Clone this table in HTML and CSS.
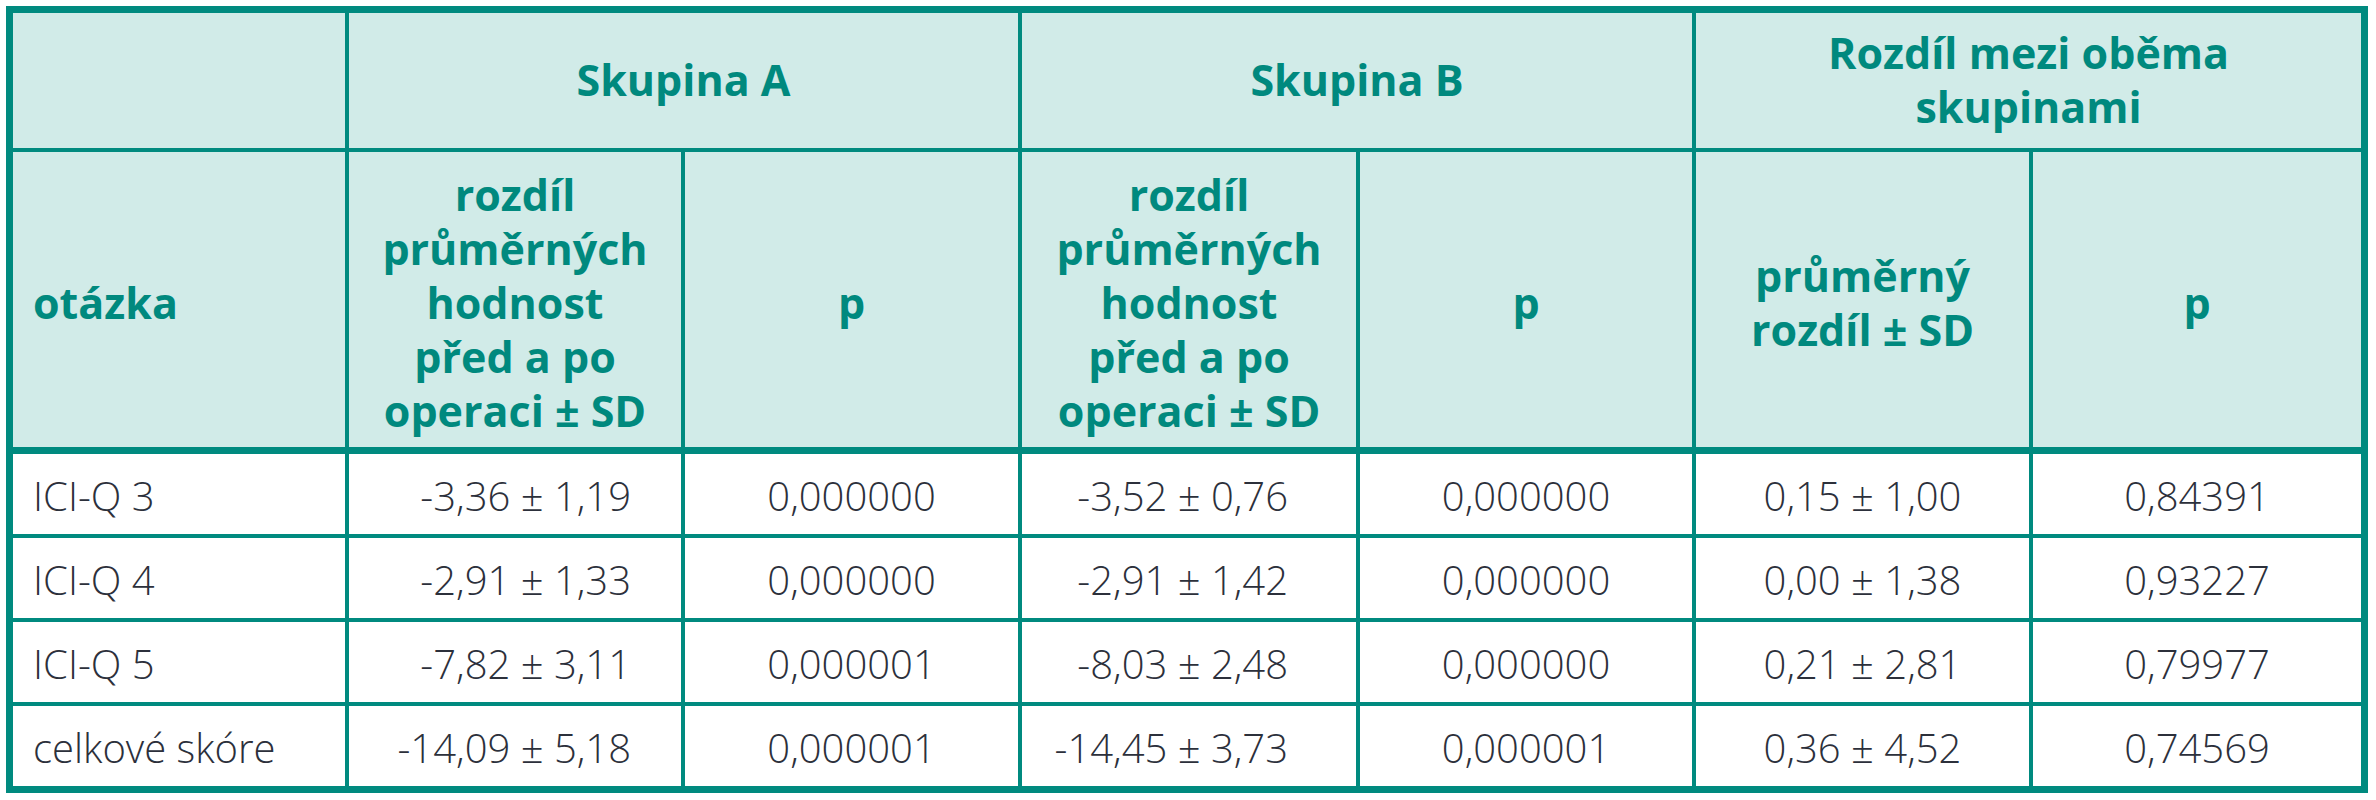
FILE: index.html
```html
<!DOCTYPE html>
<html lang="cs">
<head>
<meta charset="utf-8">
<title>Tabulka</title>
<link rel="stylesheet" href="styles.css">
</head>
<body>
<table class="data">
  <colgroup>
    <col class="w332">
    <col class="w336"><col class="w337"><col class="w338">
    <col class="w336"><col class="w337"><col class="w332">
  </colgroup>
  <thead>
    <tr class="h1">
      <th class="first"></th>
      <th colspan="2">Skupina A</th>
      <th colspan="2">Skupina B</th>
      <th colspan="2">Rozdíl mezi oběma<br>skupinami</th>
    </tr>
    <tr class="h2">
      <th class="first left">otázka</th>
      <th>rozdíl<br>průměrných<br>hodnost<br>před a po<br>operaci ± SD</th>
      <th>p</th>
      <th>rozdíl<br>průměrných<br>hodnost<br>před a po<br>operaci ± SD</th>
      <th>p</th>
      <th>průměrný<br>rozdíl ± SD</th>
      <th>p</th>
    </tr>
  </thead>
  <tbody>
    <tr class="r-first">
      <td class="first left">ICI-Q 3</td>
      <td class="va">-3,36 ± 1,19</td>
      <td>0,000000</td>
      <td class="vb">-3,52 ± 0,76</td>
      <td>0,000000</td>
      <td>0,15 ± 1,00</td>
      <td>0,84391</td>
    </tr>
    <tr>
      <td class="first left">ICI-Q 4</td>
      <td class="va">-2,91 ± 1,33</td>
      <td>0,000000</td>
      <td class="vb">-2,91 ± 1,42</td>
      <td>0,000000</td>
      <td>0,00 ± 1,38</td>
      <td>0,93227</td>
    </tr>
    <tr>
      <td class="first left">ICI-Q 5</td>
      <td class="va">-7,82 ± 3,11</td>
      <td>0,000001</td>
      <td class="vb">-8,03 ± 2,48</td>
      <td>0,000000</td>
      <td>0,21 ± 2,81</td>
      <td>0,79977</td>
    </tr>
    <tr>
      <td class="first left">celkové skóre</td>
      <td class="va">-14,09 ± 5,18</td>
      <td>0,000001</td>
      <td class="vb">-14,45 ± 3,73</td>
      <td>0,000001</td>
      <td>0,36 ± 4,52</td>
      <td>0,74569</td>
    </tr>
  </tbody>
</table>
</body>
</html>
```
FILE: styles.css
```css
html, body {
  background: #ffffff;
}
body {
  margin: 6px;
}
.data {
  box-sizing: border-box;
  width: 2362px;
  table-layout: fixed;
  border-collapse: separate;
  border-spacing: 0;
  border: 7px solid #008a7f;
}
.w332 { width: 332px; }
.w336 { width: 336px; }
.w337 { width: 337px; }
.w338 { width: 338px; }

.data th,
.data td {
  box-sizing: border-box;
  padding: 0 8px;
  text-align: center;
  vertical-align: middle;
  border-left: 4px solid #008a7f;
  border-top: 4px solid #008a7f;
  white-space: nowrap;
}
.data th.first,
.data td.first {
  border-left: 0;
}
.data .left {
  text-align: left;
  padding-left: 20px;
}

.data thead th {
  background: #d1ebe8;
  color: #00897e;
  font-family: "Open Sans", "Liberation Sans", sans-serif;
  font-weight: 700;
  font-size: 43px;
  line-height: 54px;
}
.data tr.h1 th {
  border-top: 0;
  height: 135px;
  padding-bottom: 2px;
}
.data tr.h2 th {
  height: 299px;
  padding-top: 6px;
}

.data tbody td {
  background: #ffffff;
  color: #2c303b;
  font-family: "Open Sans", "Liberation Sans", sans-serif;
  font-weight: 300;
  font-size: 40px;
  line-height: 48px;
  height: 84px;
  padding-top: 4px;
}
.data tbody tr.r-first td {
  border-top-width: 7px;
  height: 87px;
}
.data td.va {
  text-align: right;
  padding-right: 50px;
}
.data td.vb {
  text-align: right;
  padding-right: 68px;
}
```
